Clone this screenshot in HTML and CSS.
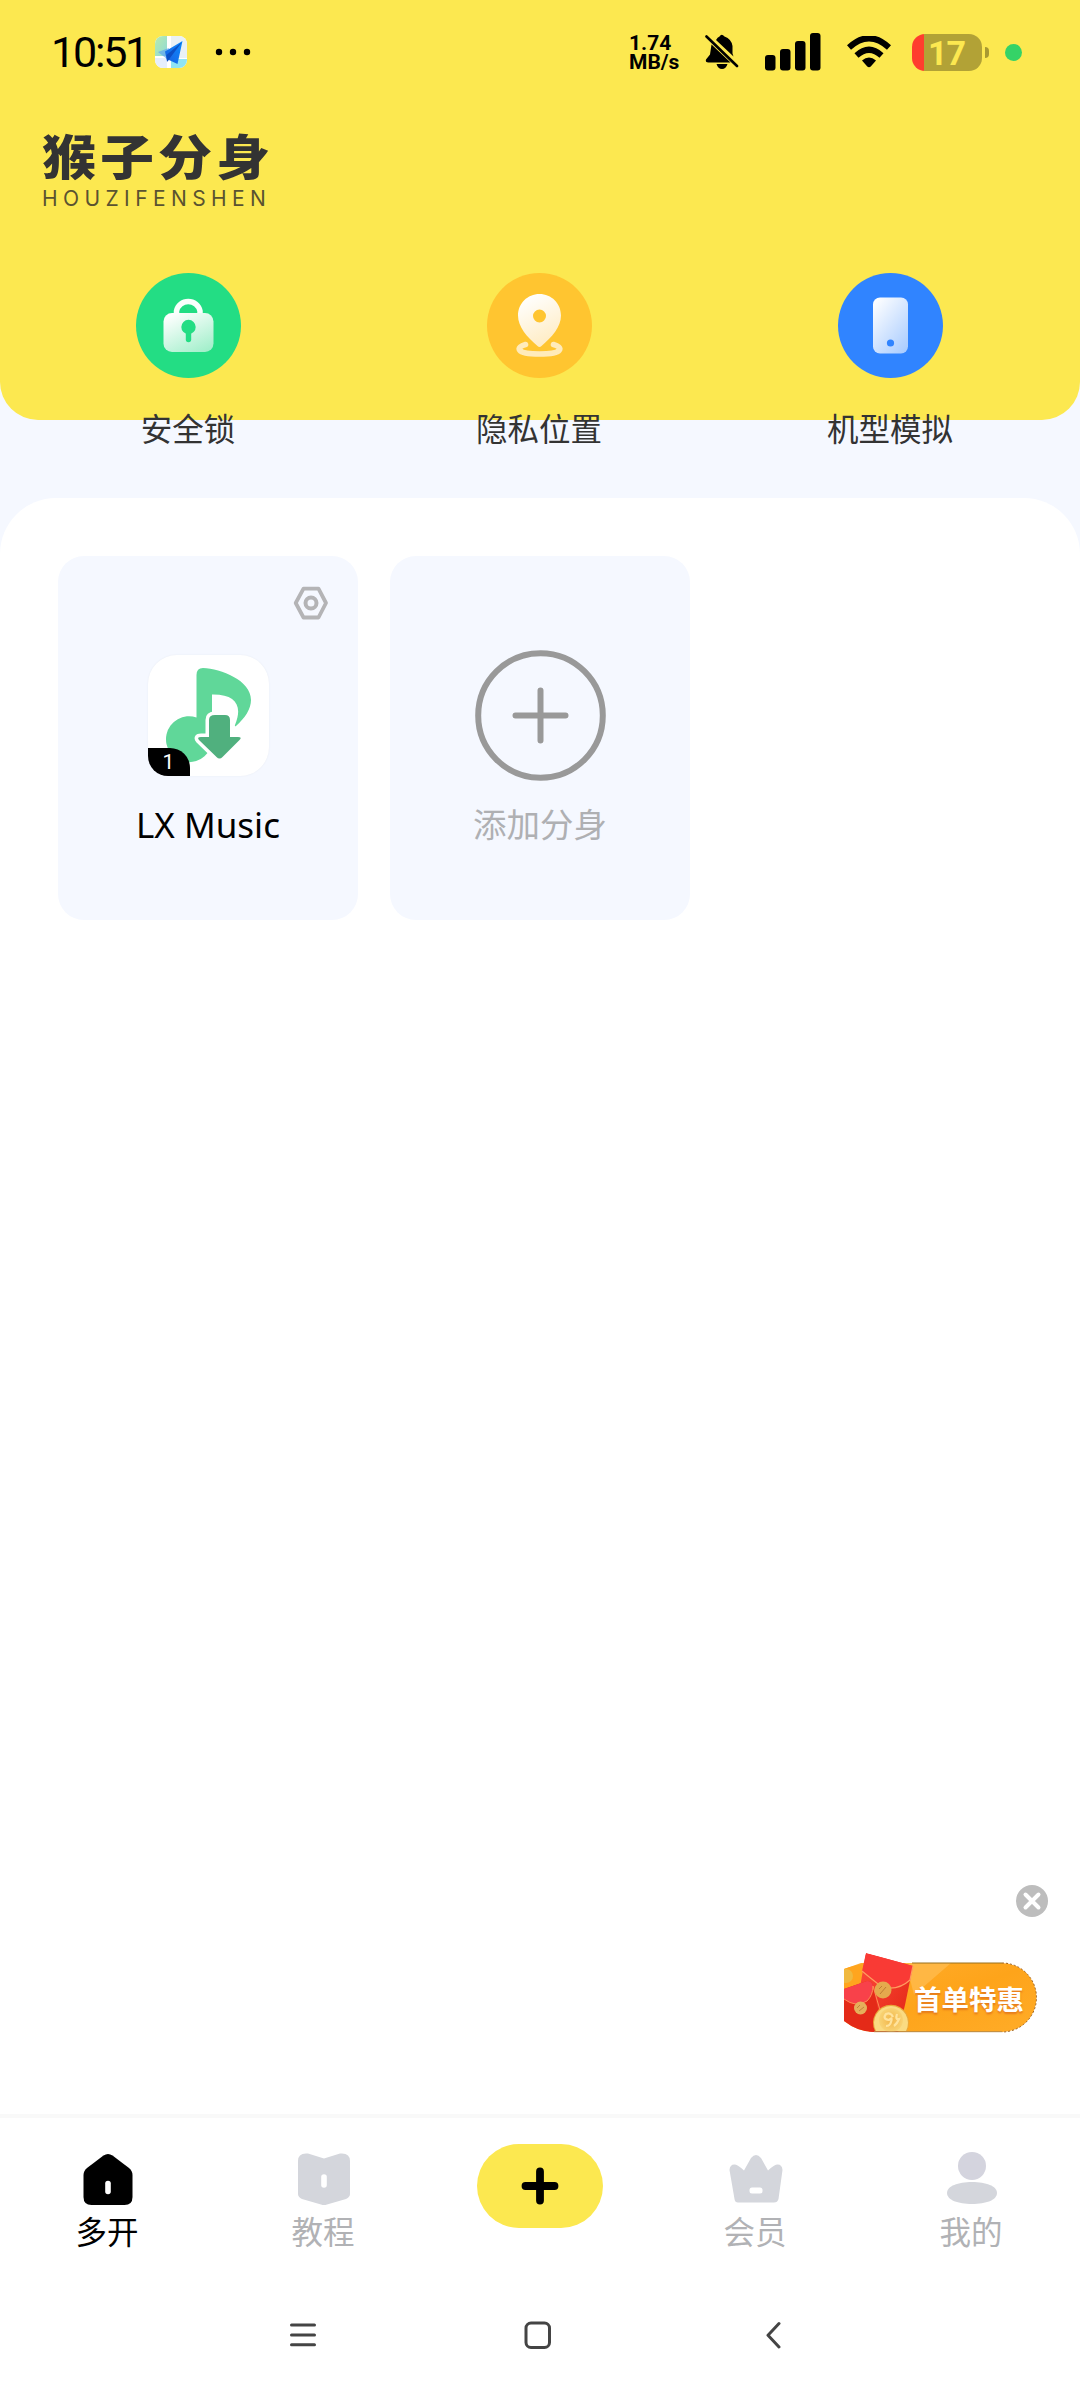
FILE: index.html
```html
<!DOCTYPE html>
<html lang="zh-CN">
<head>
<meta charset="utf-8">
<title>猴子分身</title>
<link rel="stylesheet" href="styles.css">
</head>
<body>
<div class="screen">
  <header class="hero">
    <div class="status">
      <span class="clock">10:51</span>
      <svg class="map-app" width="32" height="32" viewBox="0 0 32 32">
        <defs>
          <clipPath id="mapClip"><rect width="32" height="32" rx="8"/></clipPath>
          <linearGradient id="mapGreen" x1="0" y1="0" x2="1" y2="1"><stop offset="0" stop-color="#b9ecab"/><stop offset="1" stop-color="#8fd9d8"/></linearGradient>
          <linearGradient id="plane" x1="0" y1="1" x2="1" y2="0"><stop offset="0" stop-color="#1a5fe0"/><stop offset="1" stop-color="#0a8cff"/></linearGradient>
        </defs>
        <g clip-path="url(#mapClip)">
          <rect width="32" height="32" fill="#fff"/>
          <rect width="12" height="20" fill="url(#mapGreen)"/>
          <rect x="16" width="16" height="22" fill="#e9f1f5"/>
          <rect y="22" width="12" height="10" fill="#e6eefc"/>
          <rect x="16" y="23" width="16" height="9" fill="#8fe4f4"/>
          <path d="M3 16 L14 12 L12 23 Z" fill="#5fa5ef" opacity=".7"/>
          <path d="M27.500 5 L10 15.500 L12 25 L14 24 L22.500 28 Z" fill="url(#plane)"/>
          <path d="M27 6 L11.500 19 L12 26 L15 22 Z" fill="#0c4fc4"/>
        </g>
      </svg>
      <svg class="more" width="36" height="8" viewBox="0 0 36 8"><circle cx="4" cy="4" r="3.200"/><circle cx="18" cy="4" r="3.200"/><circle cx="32" cy="4" r="3.200"/></svg>
      <span class="speed"><span>1.74</span><span>MB/s</span></span>
      <svg class="bell" width="34" height="36" viewBox="0 0 34 36">
        <path d="M6.500 10.500 L25.500 28.500 H3.500 Q0 28.500 1 25.500 L5 20.500 Z"/>
        <path d="M11 6 Q12.500 3 14.500 2.500 Q16.500 -1 19.500 2.500 Q26.500 5 27.500 12 V19.500 L28.500 22.500 Z"/>
        <path d="M11.500 30 H22.500 Q21 35 17 35 Q13 35 11.500 30 Z"/>
        <path d="M1.500 2.500 L32 32" stroke="#000" stroke-width="2.600" stroke-linecap="round"/>
      </svg>
      <svg class="signal" width="56" height="38" viewBox="0 0 56 38"><rect x="0" y="22" width="10.500" height="15.500" rx="3"/><rect x="15" y="16" width="10.500" height="21.500" rx="3"/><rect x="30" y="8" width="10.500" height="29.500" rx="3"/><rect x="45" y="0" width="10.500" height="37.500" rx="3"/></svg>
      <svg class="wifi" width="44" height="32" viewBox="0 0 44 32">
        <path d="M2 11.500 Q22 -7 42 11.500" fill="none" stroke="#000" stroke-width="6"/>
        <path d="M9.500 19.500 Q22 8 34.500 19.500" fill="none" stroke="#000" stroke-width="6"/>
        <path d="M15 24.500 Q22 18.500 29 24.500 L24 30.300 Q22 32 20 30.300 Z"/>
      </svg>
      <span class="battery">17</span>
      <span class="battery-tip"></span>
      <span class="privacy-dot"></span>
    </div>
    <div class="brand">
      <span class="brand-name">猴子分身</span>
      <span class="brand-latin">HOUZIFENSHEN</span>
    </div>
  </header>

  <nav class="tools">
    <a class="tool">
      <svg width="105" height="105" viewBox="0 0 105 105">
        <defs><linearGradient id="lock" x1=".2" y1="0" x2=".8" y2="1"><stop offset="0" stop-color="#fff"/><stop offset="1" stop-color="#a3efcb"/></linearGradient></defs>
        <circle cx="52.500" cy="52.500" r="52.500" fill="#23dd84"/>
        <path d="M40.500 43 V38 A12 12 0 0 1 64 38 V43" fill="none" stroke="#f9fffc" stroke-width="5.500"/>
        <rect x="27.500" y="40" width="50" height="39" rx="8.500" fill="url(#lock)"/>
        <circle cx="52.500" cy="54" r="7.200" fill="#23dd84"/>
        <path d="M52.500 56 V66.500" stroke="#23dd84" stroke-width="5.400" stroke-linecap="round"/>
      </svg>
      <span>安全锁</span>
    </a>
    <a class="tool">
      <svg width="105" height="105" viewBox="0 0 105 105">
        <defs><linearGradient id="pin" x1=".3" y1="0" x2=".7" y2="1"><stop offset="0" stop-color="#fff"/><stop offset="1" stop-color="#ffebc0"/></linearGradient></defs>
        <circle cx="52.500" cy="52.500" r="52.500" fill="#ffc530"/>
        <path fill-rule="evenodd" d="M52.500 21 C64.500 21 74 30.500 74 42.500 C74 54 65 64 54.500 73 Q52.500 75 50.500 73 C40 64 31 54 31 42.500 C31 30.500 40.500 21 52.500 21 Z M52.500 36.500 A6.500 6.500 0 1 0 52.500 49.500 A6.500 6.500 0 1 0 52.500 36.500 Z" fill="url(#pin)"/>
        <path d="M38.500 71.500 C29 74 28 81 52.500 81 C77 81 76 74 66.500 71.500" fill="none" stroke="#ffebbb" stroke-width="5.600" stroke-linecap="round"/>
      </svg>
      <span>隐私位置</span>
    </a>
    <a class="tool">
      <svg width="105" height="105" viewBox="0 0 105 105">
        <defs><linearGradient id="phone" x1=".1" y1="0" x2=".9" y2="1"><stop offset="0" stop-color="#fff"/><stop offset="1" stop-color="#a9ccff"/></linearGradient></defs>
        <circle cx="52.500" cy="52.500" r="52.500" fill="#3084ff"/>
        <rect x="35" y="24.500" width="35" height="56" rx="7" fill="url(#phone)"/>
        <circle cx="52.500" cy="70" r="3.600" fill="#3084ff"/>
      </svg>
      <span>机型模拟</span>
    </a>
  </nav>

  <main class="panel">
    <section class="card">
      <svg class="settings" width="36" height="34" viewBox="0 0 36 34" fill="none" stroke="#b4b4b6">
        <path d="M10.500 2.700 H25.500 L33 17 L25.500 31.500 H10.500 L2.700 17 Z" stroke-width="3.800" stroke-linejoin="round"/>
        <circle cx="18" cy="17" r="5.500" stroke-width="4"/>
      </svg>
      <div class="app-icon">
        <svg width="121" height="121" viewBox="0 0 121 121">
          <path d="M48.500 20 Q48.500 13 55 13 C73 14 103 25 103 45 C103 54 97 63 88 71 Q86.500 72 87 70 C95 51 88 39 64 39.500 V84 A23 23 0 1 1 48.500 62.500 Z" fill="#60d799"/>
          <path d="M67 60 H77 Q82 60 82 65 V82 H90 Q94.500 82 91.500 85 L74.500 102 Q71.500 105 68.500 102 L51 85 Q48.500 82 53 82 H61 V65 Q61 60 67 60 Z" fill="#fff" stroke="#fff" stroke-width="7" stroke-linejoin="round"/>
          <path d="M67 60 H77 Q82 60 82 65 V82 H90 Q94.500 82 91.500 85 L74.500 102 Q71.500 105 68.500 102 L51 85 Q48.500 82 53 82 H61 V65 Q61 60 67 60 Z" fill="#50b07e"/>
        </svg>
        <span class="badge">1</span>
      </div>
      <span class="card-title">LX Music</span>
    </section>
    <section class="card card-add">
      <svg class="add" width="131" height="131" viewBox="0 0 131 131" fill="none" stroke="#999" stroke-width="6">
        <circle cx="65.500" cy="65.500" r="62.300"/>
        <path d="M65.500 40.500 V90.500 M40.500 65.500 H90.500" stroke-linecap="round"/>
      </svg>
      <span class="card-title">添加分身</span>
    </section>
  </main>

  <aside class="promo">
    <svg class="promo-close" width="32" height="32" viewBox="0 0 32 32"><circle cx="16" cy="16" r="16" fill="#bdbdbd"/><path d="M9.500 9.500 L22.500 22.500 M22.500 9.500 L9.500 22.500" stroke="#fff" stroke-width="4" stroke-linecap="round"/></svg>
    <div class="offer">
      <svg class="offer-art" width="193" height="80" viewBox="0 0 193 80">
        <defs>
          <linearGradient id="pill" x1="0" y1="0" x2="1" y2="1"><stop offset="0" stop-color="#ffad2d"/><stop offset=".5" stop-color="#fea41a"/><stop offset="1" stop-color="#ffac28"/></linearGradient>
          <linearGradient id="red" x1="0" y1="0" x2="1" y2="1"><stop offset="0" stop-color="#ff4a3c"/><stop offset="1" stop-color="#e02412"/></linearGradient>
          <radialGradient id="coin"><stop offset="0" stop-color="#f2b548"/><stop offset="1" stop-color="#f8d374"/></radialGradient>
          <clipPath id="pillClip"><path d="M0 16 L17 10 L22 0 L62 10 H158 A34.500 34.500 0 0 1 158 79 H30 Q14 79 0 68 Z"/></clipPath>
        </defs>
        <g clip-path="url(#pillClip)">
          <path d="M0 10 H193 V80 H0 Z" fill="url(#pill)"/>
          <path d="M62 10 H107 L70 42 Z" fill="#ffbd52" opacity=".7"/>
          <path d="M0 15 L19 11 L16 32 L0 38 Z" fill="#ffa51e"/>
          <circle cx="2" cy="23" r="7" fill="#f0b93f"/>
          <path d="M22 0 L69 13 L61 52 L54 80 H25 L16 34 Z" fill="url(#red)"/>
          <path d="M22 0 L69 13 L66 27 Q54 38 38 34 Q25 24 18 18 Z" fill="#f93a35"/>
          <path d="M18 18 Q25 24 38 34 Q54 38 66 27 L69 13" fill="none" stroke="#ff9b5e" stroke-width="1.200"/>
          <path d="M0 36 L23 28 Q28 28 29 33 L39 80 H0 Z" fill="#e42a18"/>
          <path d="M0 36 L23 28 Q28 28 29 33 Q29 42 23 48 Q12 55 0 46 Z" fill="#f8414a"/>
          <path d="M0 46 Q12 55 23 48 Q29 42 29 33 L38 64" fill="none" stroke="#ff8d54" stroke-width="1"/>
        </g>
        <circle cx="39" cy="37" r="8.500" fill="#e5a94d"/><path d="M35 36 L38 33 M36 41 L42 34" stroke="#bf7e34"/>
        <circle cx="16.500" cy="55" r="6.500" fill="#e5b05b"/><path d="M13 55 L16 52 M15 58 L20 54" stroke="#c1833c"/>
        <path d="M31 78 A18 18 0 1 1 63 78 Z" fill="#e9a83b"/>
        <path d="M32 78 A17 17 0 1 1 62 78 Z" fill="#fadb82"/>
        <circle cx="47" cy="67" r="12" fill="url(#coin)"/>
        <path d="M49 64 Q47 59 42 61 Q38 66 45 67 Q49 63 47 69 Q46 73 42 73 M53 61 Q51 67 55 66 Q53 71 50 73" fill="none" stroke="#ffe39c" stroke-width="2.200"/>
        <path d="M68 10 H158" stroke="#98701f" stroke-width="1"/><path d="M30 78.700 H158" stroke="#b98a48" stroke-width="1"/>
        <path d="M158 10 A34.500 34.500 0 0 1 158 79" fill="none" stroke="#995c19" stroke-width="1" stroke-dasharray="2 2"/>
      </svg>
      <span class="offer-text">首单特惠</span>
    </div>
  </aside>

  <footer class="bottom">
    <nav class="tabs">
      <a class="tab tab-active">
        <svg width="54" height="54" viewBox="0 0 54 54"><path d="M22.500 2.500 Q27 -.5 31.500 2.500 L48 15 Q51.500 18 51.500 22 V44 Q51.500 52 43.500 52 H10.500 Q2.500 52 2.500 44 V22 Q2.500 18 6 15 Z"/><path d="M27 30.500 V38.500" stroke="#fff" stroke-width="5.600" stroke-linecap="round"/></svg>
        <span>多开</span>
      </a>
      <a class="tab">
        <svg width="54" height="54" viewBox="0 0 54 54"><path d="M1 8 Q1 -.5 11 .5 L27 5.500 L43 .5 Q53 -.5 53 8 V41 Q53 44 49 46 L30 51.500 Q27 52.500 24 51.500 L5 46 Q1 44 1 41 Z" fill="#d4d6dc"/><path d="M27 24 V32" stroke="#fff" stroke-width="5.600" stroke-linecap="round"/></svg>
        <span>教程</span>
      </a>
      <a class="tab-create"><svg width="38" height="44" viewBox="0 0 38 44"><path d="M19 7.500 V36.500 M4.500 22 H33.500" stroke="#000" stroke-width="7.800" stroke-linecap="round"/></svg></a>
      <a class="tab">
        <svg width="54" height="54" viewBox="0 0 54 54"><path d="M.5 17 Q1 11 6 11.500 Q9 12 15 17.500 L22 5 Q27 -1 32 5 L39 17.500 Q45 12 48 11.500 Q53 11 53.500 17 L49.500 46 Q48.500 49.500 45 49.500 H9 Q6 49.500 5.500 46 Z" fill="#d4d6dc"/><rect x="20.500" y="34.500" width="13" height="6" rx="2.500" fill="#fff"/></svg>
        <span>会员</span>
      </a>
      <a class="tab">
        <svg width="54" height="54" viewBox="0 0 54 54" fill="#d4d6dc"><circle cx="27" cy="13" r="14" fill="#d4d4de"/><path d="M2 40 C2 33 13 29 27 29 C41 29 52 33 52 40 C52 47 41 51 27 51 C13 51 2 47 2 40 Z"/></svg>
        <span>我的</span>
      </a>
    </nav>
    <div class="system-nav">
      <svg width="28" height="28" viewBox="0 0 28 28"><path d="M2.500 4 H25.500 M2.500 14 H25.500 M2.500 23.700 H25.500"/></svg>
      <svg width="28" height="28" viewBox="0 0 28 28"><rect x="2" y="2" width="23.500" height="24.500" rx="5"/></svg>
      <svg width="28" height="28" viewBox="0 0 28 28"><path d="M20 2.500 L9 14.200 L20 26"/></svg>
    </div>
  </footer>
</div>
</body>
</html>
```
FILE: styles.css
```css
* { box-sizing: border-box; }

body {
  margin: 0;
  font-family: "Noto Sans CJK SC", sans-serif;
  background: #fff;
}

svg { display: block; flex: none; }

.screen {
  display: flex;
  flex-direction: column;
  width: 1080px;
  height: 2400px;
  overflow: hidden;
  background: #f5f8ff;
}

.hero {
  flex: none;
  height: 420px;
  border-radius: 0 0 38px 38px;
  background: #fce850;
}

.status {
  display: flex;
  align-items: center;
  height: 104px;
  padding-left: 51px;
}

.clock {
  width: 104px;
  font: 400 43px/1 Roboto, sans-serif;
  letter-spacing: -2.2px;
  white-space: nowrap;
}

.more { margin-left: 28px; }

.speed {
  display: flex;
  flex-direction: column;
  width: 76px;
  margin-left: 378px;
  font: 700 21px/19px Roboto, sans-serif;
  padding-top: 2px;
}

.signal { margin-left: 26px; }
.wifi { margin-left: 26px; }

.battery {
  width: 70px;
  height: 37px;
  margin-left: 21px;
  padding-right: 1px;
  border-radius: 13px;
  background: linear-gradient(90deg, #ff3d2e 12px, #b2a236 12px);
  color: #fce850;
  font: 700 34px/38px Roboto, sans-serif;
  letter-spacing: -1px;
  text-align: center;
}

.battery-tip {
  width: 4px;
  height: 11px;
  margin-left: 3px;
  border-radius: 0 4px 4px 0;
  background: #a89931;
}

.privacy-dot {
  width: 17px;
  height: 17px;
  margin-left: 16px;
  border-radius: 50%;
  background: #35d367;
}

.brand {
  display: flex;
  flex-direction: column;
  padding: 25px 0 0 42px;
  color: #333;
}

.brand-name {
  font-size: 54px;
  font-weight: 900;
  line-height: 52px;
  letter-spacing: 4px;
  transform: scaleY(.88);
}

.brand-latin {
  margin-top: 6px;
  color: #5a5330;
  font: 400 21px/24px Inter, sans-serif;
  letter-spacing: 5.4px;
}

.tools {
  display: grid;
  flex: none;
  grid-template-columns: repeat(3, 351px);
  justify-content: center;
  height: 225px;
  margin-top: -147px;
  padding-right: 2px;
  color: #333;
}

.tool {
  display: flex;
  flex-direction: column;
  align-items: center;
  gap: 26px;
  font-size: 31.5px;
  line-height: 46px;
}

.panel {
  display: flex;
  flex: 1;
  gap: 32px;
  padding: 58px;
  border-radius: 56px 56px 0 0;
  background: #fff;
}

.card {
  display: flex;
  flex-direction: column;
  align-items: center;
  width: 300px;
  height: 364px;
  border-radius: 26px;
  background: #f5f8ff;
}

.settings {
  align-self: flex-end;
  margin: 30px 29px 0 0;
}

.app-icon {
  position: relative;
  width: 121px;
  height: 121px;
  margin-top: 35px;
  border-radius: 29px;
  background: #fff;
  box-shadow: 0 0 2px #e8ebf1;
}

.badge {
  position: absolute;
  left: 0;
  bottom: 0;
  width: 42px;
  height: 28px;
  border-radius: 0 20px 0 20px;
  background: #000;
  color: #fff;
  font: 400 21px/29px Roboto, sans-serif;
  text-align: center;
}

.card-title {
  margin-top: 24px;
  font: 400 35px/50px "Noto Sans", "Noto Sans CJK SC", sans-serif;
}

.card-add { padding-top: 94px; color: #afb0b3; }
.card-add .card-title { margin-top: 17px; font: 400 33.5px/50px "Noto Sans CJK SC", sans-serif; }

.promo {
  position: absolute;
  left: 844px;
  top: 1885px;
  display: flex;
  flex-direction: column;
  width: 204px;
}

.promo-close { align-self: flex-end; }

.offer {
  position: relative;
  width: 193px;
  height: 80px;
  margin-top: 36px;
}

.offer-text {
  position: absolute;
  left: 70px;
  top: 25px;
  color: #fff;
  font-size: 27.5px;
  font-weight: 700;
  line-height: 40px;
  text-shadow: 0 2px 2px #e57a1c;
}

.bottom { flex: none; height: 286px; }

.tabs {
  display: grid;
  grid-template-columns: repeat(5, 216px);
  height: 154px;
  padding-top: 30px;
  border-top: 4px solid #f9f9f9;
  background: #fff;
}

.tab {
  display: flex;
  flex-direction: column;
  align-items: center;
  padding-top: 5px;
  color: #b1b2b5;
  font-size: 31.5px;
  line-height: 46px;
}

.tab svg { overflow: visible; }
.tab span { margin-right: 2px; }
.tab-active { color: #000; }

.tab-create {
  display: flex;
  justify-content: center;
  align-items: center;
  width: 126px;
  height: 84px;
  margin: -4px auto 0;
  border-radius: 42px;
  background: #fce850;
}

.system-nav {
  display: flex;
  justify-content: center;
  gap: 207px;
  height: 132px;
  padding: 53px 4px 0 0;
  background: #fff;
}

.system-nav svg {
  fill: none;
  stroke: #444;
  stroke-width: 3;
  stroke-linecap: round;
  stroke-linejoin: round;
}
```
